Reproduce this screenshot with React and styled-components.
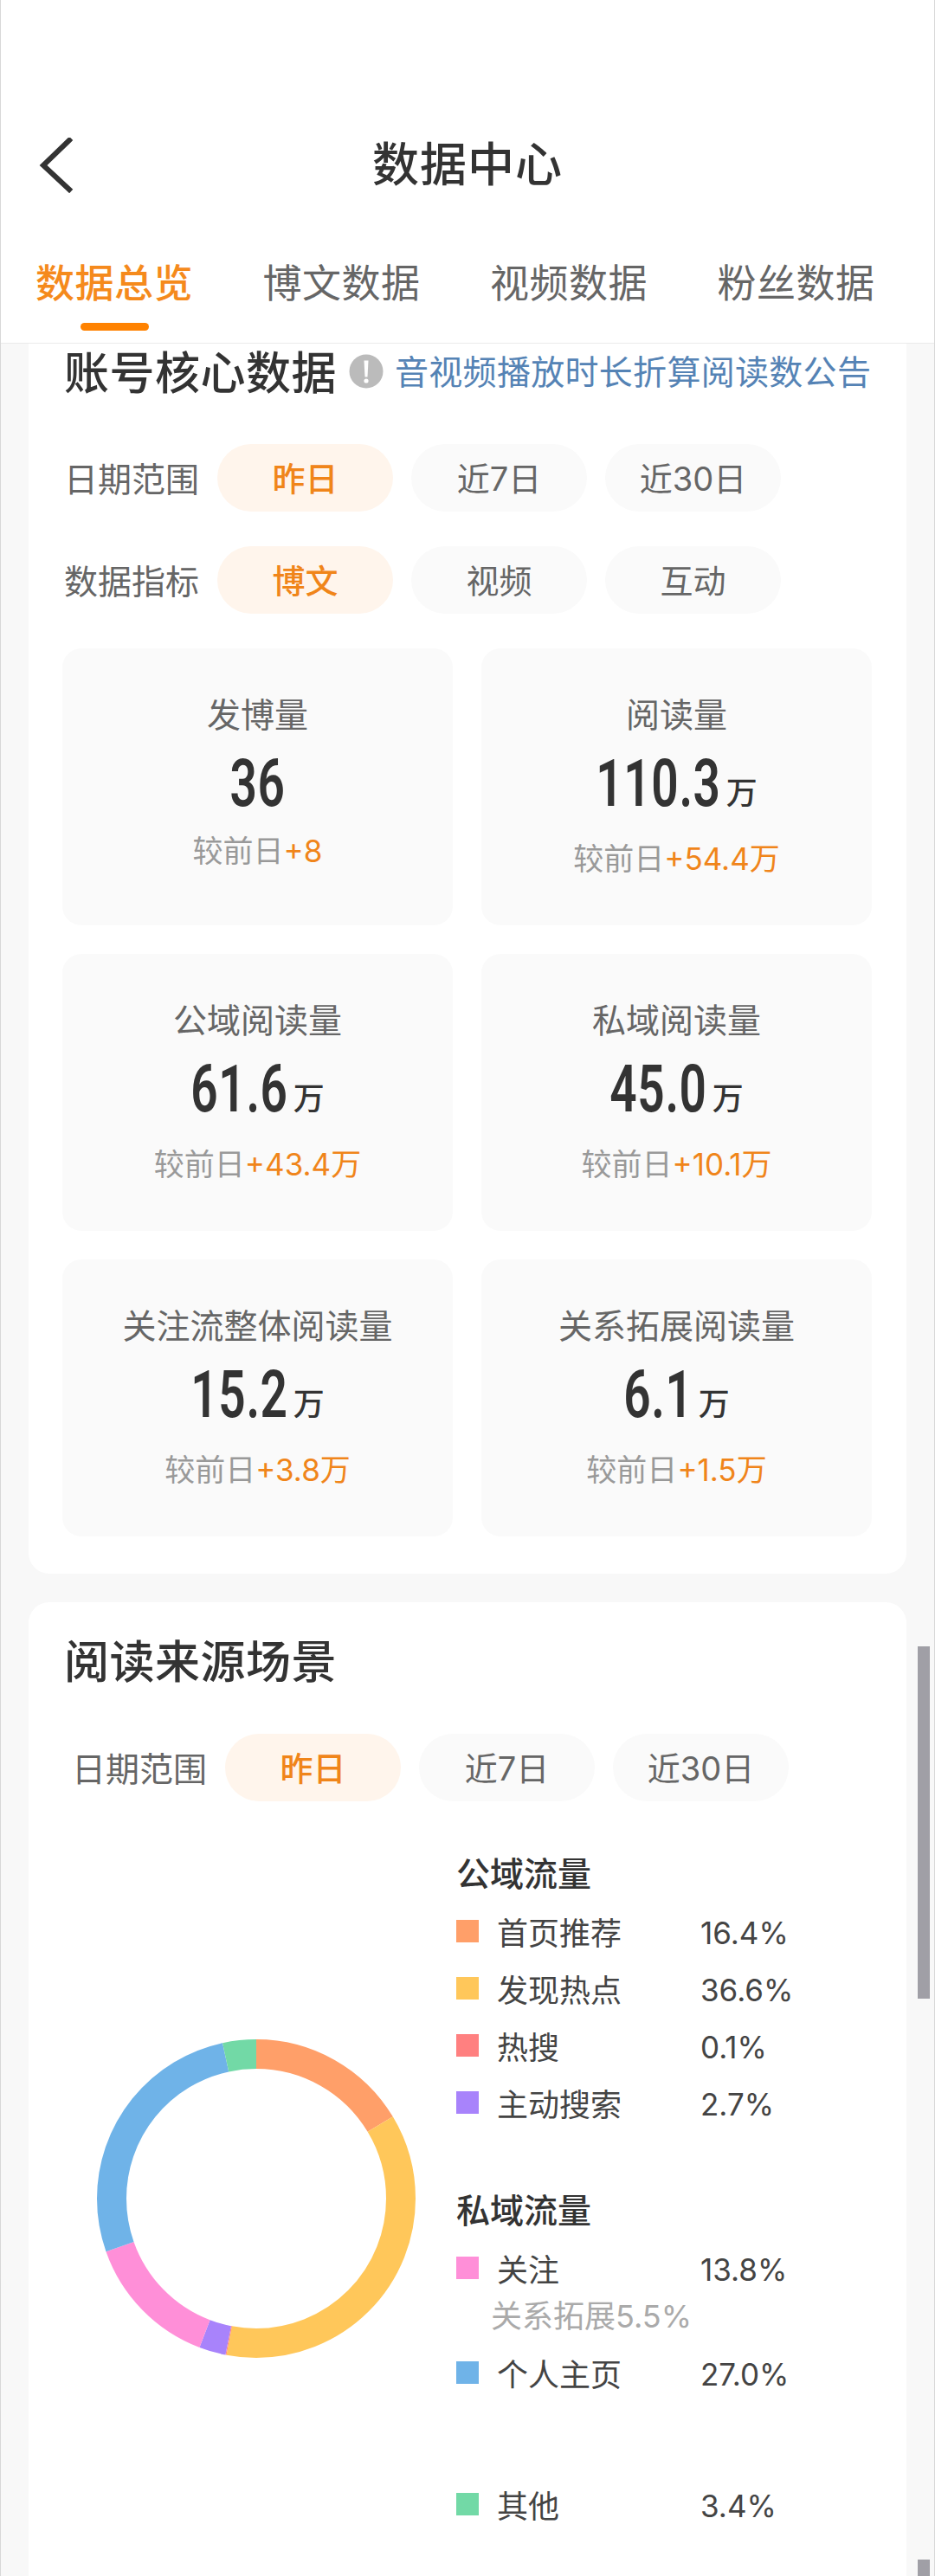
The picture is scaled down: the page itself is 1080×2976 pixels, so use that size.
import React from "react";
import styled, { createGlobalStyle } from "styled-components";

const Global = createGlobalStyle`
  html, body { margin: 0; padding: 0; background: #f8f8f8; }
  * { box-sizing: border-box; }
  body { font-family: "Inter", "Noto Sans CJK SC", sans-serif; }
`;

const Page = styled.div`
  width: 1080px;
  height: 2976px;
  overflow: hidden;
  position: relative;
  background: #f8f8f8;
  border-left: 1px solid #d8d8d8;
  border-right: 1px solid #d8d8d8;
`;

const Header = styled.header`
  height: 397px;
  padding-top: 141px;
  background: #fff;
  border-bottom: 1px solid #ebebeb;
`;

const TitleBar = styled.div`
  display: grid;
  grid-template-columns: 1fr auto 1fr;
  align-items: center;
  height: 100px;
  padding: 0 44px;
`;

const Title = styled.h1`
  margin: 0;
  font-size: 54px;
  font-weight: 500;
  line-height: 100px;
  letter-spacing: 1px;
  color: #333;
`;

const Tabs = styled.nav`
  display: flex;
  gap: 80.5px;
  margin-top: 56px;
  padding-left: 40px;
`;

const Tab = styled.div`
  position: relative;
  font-size: 45px;
  line-height: 60px;
  letter-spacing: 0.5px;
  white-space: nowrap;
  padding-top: 1px;
  height: 60px;
  font-weight: ${(p) => (p.$active ? 500 : 400)};
  color: ${(p) => (p.$active ? "#f58a1c" : "#666")};
  &::after {
    content: "";
    display: ${(p) => (p.$active ? "block" : "none")};
    position: absolute;
    left: 52px;
    bottom: -25px;
    width: 79px;
    height: 9px;
    border-radius: 5px;
    background: #ff8200;
  }
`;

const Card = styled.section`
  margin: ${(p) => (p.$gap ? "33px" : "0")} 32px 0;
  padding: 0 39px ${(p) => (p.$gap ? "200px" : "0")};
  background: #fff;
  border-radius: ${(p) => (p.$gap ? "24px 24px 0 0" : "0 0 24px 24px")};
`;

const CardHead = styled.div`
  display: flex;
  align-items: center;
  height: ${(p) => p.$h}px;
  padding-bottom: 4px;
`;

const CardTitle = styled.h2`
  margin: 0 0 0 2px;
  font-size: 52px;
  font-weight: 500;
  letter-spacing: 0.5px;
  color: #333;
  white-space: nowrap;
`;

const Notice = styled.a`
  margin-left: 13px;
  font-size: 39px;
  letter-spacing: 0.3px;
  color: #5583b5;
  white-space: nowrap;
`;

const InfoIcon = styled.svg`
  width: 40px;
  height: 40px;
  margin-left: 14px;
  margin-top: 4px;
  flex: none;
`;

const FilterRow = styled.div`
  display: flex;
  align-items: center;
  gap: 21px;
  margin-top: ${(p) => p.$mt}px;
  margin-left: ${(p) => p.$ml || 0}px;
`;

const FilterLabel = styled.div`
  width: 158px;
  font-size: 39px;
  padding-bottom: 3px;
  color: #666;
  white-space: nowrap;
  text-align: right;
`;

const Pill = styled.div`
  width: 203px;
  height: 78px;
  padding-bottom: 3px;
  border-radius: 39px;
  display: flex;
  align-items: center;
  justify-content: center;
  font-size: 38px;
  font-weight: ${(p) => (p.$active ? 500 : 400)};
  color: ${(p) => (p.$active ? "#f0851a" : "#666")};
  background: ${(p) => (p.$active ? "#fff5ec" : "#fafafa")};
`;

const StatGrid = styled.div`
  display: grid;
  grid-template-columns: 451px 451px;
  column-gap: 33px;
  row-gap: 33px;
  margin-top: 40px;
  padding-bottom: 43px;
`;

const StatCard = styled.div`
  height: 320px;
  padding-top: 52px;
  border-radius: 22px;
  background: #fafafa;
  display: flex;
  flex-direction: column;
  align-items: center;
`;

const StatLabel = styled.div`
  height: 50px;
  line-height: 50px;
  font-size: 39px;
  color: #666;
  white-space: nowrap;
`;

const StatValue = styled.div`
  height: ${(p) => (p.$plain ? 99 : 108)}px;
  padding-top: 25px;
  display: flex;
  align-items: baseline;
  justify-content: center;
  line-height: 68px;
  white-space: nowrap;
  color: #333;
`;

const Digits = styled.span`
  display: inline-block;
  font-family: "Roboto", sans-serif;
  font-size: 55px;
  font-weight: 600;
  letter-spacing: 0.6px;
  transform: scaleY(1.38);
  transform-origin: 50% 70%;
`;

const Unit = styled.span`
  margin-left: 6px;
  font-size: 36px;
  font-weight: 500;
`;

const Delta = styled.div`
  height: 66px;
  line-height: 66px;
  font-size: 35px;
  color: #999;
  white-space: nowrap;
`;

const DeltaValue = styled.span`
  color: #f0851a;
`;

const Chart = styled.div`
  display: flex;
  align-items: flex-start;
  gap: 47px;
  padding-left: 40px;
`;

const Donut = styled.svg`
  flex: none;
  width: 368px;
  height: 368px;
  margin-top: 275px;
  transform: rotate(-90deg);
`;

const Legend = styled.div`
  display: flex;
  flex-direction: column;
  margin-top: 51px;
`;

const LegendGroup = styled.div`
  display: flex;
  flex-direction: column;
  margin-bottom: ${(p) => p.$mb || 0}px;
`;

const LegendHead = styled.div`
  height: 66px;
  line-height: 66px;
  font-size: 39px;
  font-weight: 500;
  color: #333;
`;

const LegendRow = styled.div`
  display: flex;
  align-items: center;
  height: 66px;
  font-size: 36px;
  color: #333;
`;

const Swatch = styled.i`
  flex: none;
  width: 26px;
  height: 26px;
  margin-right: 21px;
  background: ${(p) => p.$color};
`;

const LegendName = styled.span`
  width: 235px;
  white-space: nowrap;
  color: #444;
`;

const LegendValue = styled.span`
  white-space: nowrap;
  font-size: 35px;
  padding-top: 3px;
  color: #444;
`;

const LegendSub = styled.div`
  height: 55px;
  line-height: 46px;
  padding-left: 40px;
  font-size: 36px;
  color: #aaa;
  white-space: nowrap;
`;

const ScrollThumb = styled.div`
  position: absolute;
  left: 1059px;
  width: 14px;
  top: ${(p) => p.$top}px;
  height: ${(p) => p.$h}px;
  background: #a09fa6;
`;

const dateOptions = ["昨日", "近7日", "近30日"];
const metricOptions = ["博文", "视频", "互动"];

const stats = [
  { label: "发博量", value: "36", delta: "+8", plain: true },
  { label: "阅读量", value: "110.3", delta: "+54.4万" },
  { label: "公域阅读量", value: "61.6", delta: "+43.4万" },
  { label: "私域阅读量", value: "45.0", delta: "+10.1万" },
  { label: "关注流整体阅读量", value: "15.2", delta: "+3.8万" },
  { label: "关系拓展阅读量", value: "6.1", delta: "+1.5万" },
];

const segments = [
  { v: 16.4, c: "#ff9f69" },
  { v: 36.6, c: "#ffc75a" },
  { v: 0.1, c: "#ff8080" },
  { v: 2.7, c: "#a883fb" },
  { v: 13.8, c: "#ff8fd8" },
  { v: 27.0, c: "#6fb3e8" },
  { v: 3.4, c: "#72d9a6" },
];

function Filter({ label, options, mt, ml }) {
  return (
    <FilterRow $mt={mt} $ml={ml}>
      <FilterLabel>{label}</FilterLabel>
      {options.map((o, i) => (
        <Pill key={o} $active={i === 0}>{o}</Pill>
      ))}
    </FilterRow>
  );
}

function Row({ color, name, value }) {
  return (
    <LegendRow>
      <Swatch $color={color} />
      <LegendName>{name}</LegendName>
      <LegendValue>{value}</LegendValue>
    </LegendRow>
  );
}

export default function App() {
  let acc = 0;
  return (
    <Page>
      <Global />
      <Header>
        <TitleBar>
          <svg width="40" height="64" viewBox="0 0 40 64" fill="none">
            <path d="M35 3 L5 32 L35 60" stroke="#333" strokeWidth="6" strokeLinecap="square" />
          </svg>
          <Title>数据中心</Title>
        </TitleBar>
        <Tabs>
          <Tab $active>数据总览</Tab>
          <Tab>博文数据</Tab>
          <Tab>视频数据</Tab>
          <Tab>粉丝数据</Tab>
        </Tabs>
      </Header>

      <Card>
        <CardHead $h={64}>
          <CardTitle>账号核心数据</CardTitle>
          <InfoIcon viewBox="0 0 40 40">
            <circle cx="20" cy="20" r="19.5" fill="#bbb" />
            <path d="M17.5 7.5h5l-1 19h-3z" fill="#fff" />
            <circle cx="20" cy="31" r="2.6" fill="#fff" />
          </InfoIcon>
          <Notice>音视频播放时长折算阅读数公告</Notice>
        </CardHead>
        <Filter label="日期范围" options={dateOptions} mt={52} />
        <Filter label="数据指标" options={metricOptions} mt={40} />
        <StatGrid>
          {stats.map((s) => (
            <StatCard key={s.label}>
              <StatLabel>{s.label}</StatLabel>
              <StatValue $plain={s.plain}>
                <Digits>{s.value}</Digits>
                {!s.plain && <Unit>万</Unit>}
              </StatValue>
              <Delta>
                较前日<DeltaValue>{s.delta}</DeltaValue>
              </Delta>
            </StatCard>
          ))}
        </StatGrid>
      </Card>

      <Card $gap>
        <CardHead $h={134}>
          <CardTitle>阅读来源场景</CardTitle>
        </CardHead>
        <Filter label="日期范围" options={dateOptions} mt={18} ml={9} />
        <Chart>
          <Donut viewBox="0 0 368 368">
            {segments.map((s) => {
              const offset = -acc;
              acc += s.v;
              return (
                <circle
                  key={s.c}
                  cx="184"
                  cy="184"
                  r="167"
                  fill="none"
                  stroke={s.c}
                  strokeWidth="34"
                  pathLength="100"
                  strokeDasharray={`${s.v} ${100 - s.v}`}
                  strokeDashoffset={offset}
                />
              );
            })}
          </Donut>
          <Legend>
            <LegendGroup $mb={59}>
              <LegendHead>公域流量</LegendHead>
              <Row color="#ff9f69" name="首页推荐" value="16.4%" />
              <Row color="#ffc75a" name="发现热点" value="36.6%" />
              <Row color="#ff8080" name="热搜" value="0.1%" />
              <Row color="#a883fb" name="主动搜索" value="2.7%" />
            </LegendGroup>
            <LegendGroup $mb={86}>
              <LegendHead>私域流量</LegendHead>
              <Row color="#ff8fd8" name="关注" value="13.8%" />
              <LegendSub>关系拓展5.5%</LegendSub>
              <Row color="#6fb3e8" name="个人主页" value="27.0%" />
            </LegendGroup>
            <Row color="#72d9a6" name="其他" value="3.4%" />
          </Legend>
        </Chart>
      </Card>

      <ScrollThumb $top={1902} $h={407} />
      <ScrollThumb $top={2957} $h={19} />
    </Page>
  );
}
